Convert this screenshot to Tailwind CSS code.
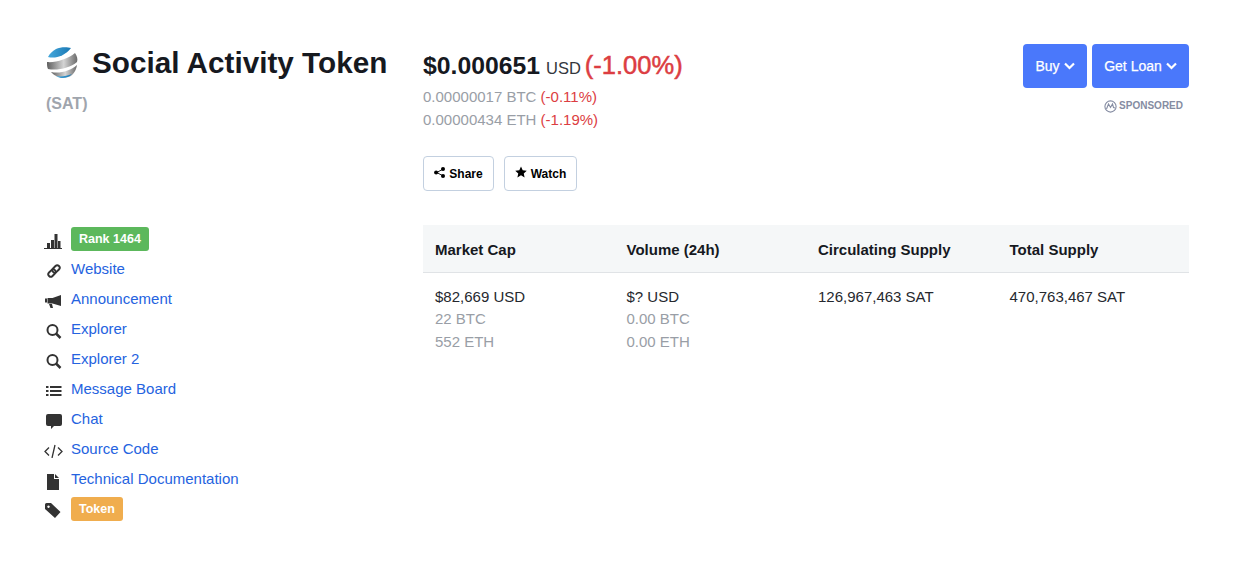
<!DOCTYPE html>
<html>
<head>
<meta charset="utf-8">
<script src="https://cdn.jsdelivr.net/npm/@tailwindcss/browser@4"></script>
</head>
<body class="bg-white font-['Liberation_Sans',Arial,sans-serif] text-[#16191f]">
<div class="pl-[46px] pr-[46px] pt-[44px] w-[1235px] h-[566px] overflow-hidden">
  <div class="flex h-[181px]">
    <div class="w-[377px]">
      <div class="flex items-center h-[38px]">
        <svg class="w-[32px] h-[32px] mr-[14px]" viewBox="0 0 32 32">
          <defs>
            <linearGradient id="g1" x1="0" y1="0" x2="1" y2="0"><stop offset="0" stop-color="#5f5f5f"/><stop offset=".55" stop-color="#d4d4d4"/><stop offset="1" stop-color="#6a6a6a"/></linearGradient>
            <linearGradient id="b1" x1="0" y1="0" x2="1" y2="0"><stop offset="0" stop-color="#45a8dc"/><stop offset="1" stop-color="#1a78b4"/></linearGradient>
          </defs>
          <path d="M2 10 C9 12 19 9 25 1 C21 0 14 0 10 2 C7 4 4 6 2 10Z" fill="url(#b1)"/>
          <path d="M1 15 C9 16 22 12 29 6 C31 9 32 12 31 15 C24 21 11 24 2 22 C1 20 1 18 1 15Z" fill="url(#g1)"/>
          <path d="M5 25 C14 27 24 24 31 18 C30 24 27 28 23 30 C16 31 9 30 5 25Z" fill="url(#g1)"/>
          <path d="M10 29 C15 30 21 29 26 27 C22 32 14 32 10 29Z" fill="url(#b1)"/>
        </svg>
        <h1 class="text-[29.7px] font-bold leading-[38px]">Social Activity Token</h1>
      </div>
      <div class="mt-[12px] text-[16px] leading-[20px] font-bold text-[#a0a5ad]">(SAT)</div>
    </div>
    <div class="flex-1">
      <div class="flex justify-between">
        <div>
          <div class="flex items-baseline h-[42px] pt-[1px]">
            <span class="text-[24.75px] font-bold leading-[40px]">$0.000651</span>
            <span class="text-[16.5px] ml-[6px] text-[#33373d]">USD</span>
            <span class="text-[25.5px] ml-[4px] text-[#dc3d42] leading-[40px] [-webkit-text-stroke:0.5px_#dc3d42]">(-1.00%)</span>
          </div>
          <div class="text-[15px] leading-[23px] text-[#999ea6] mt-[-1px]">0.00000017 BTC <span class="text-[#dc3d42]">(-0.11%)</span></div>
          <div class="text-[15px] leading-[23px] text-[#999ea6]">0.00000434 ETH <span class="text-[#dc3d42]">(-1.19%)</span></div>
        </div>
        <div class="flex flex-col items-end">
          <div class="flex gap-[5px]">
            <button class="h-[44px] w-[64px] rounded-[4px] bg-[#4a78fb] text-white text-[14px] flex items-center justify-center gap-[4px] [-webkit-text-stroke:0.25px_#fff]">Buy
              <svg class="w-[11px] h-[8px]" viewBox="0 0 11 8"><path d="M1 1.500 L5.500 6 L10 1.500" fill="none" stroke="#fff" stroke-width="2.200"/></svg>
            </button>
            <button class="h-[44px] w-[97px] rounded-[4px] bg-[#4a78fb] text-white text-[14px] flex items-center justify-center gap-[4px] [-webkit-text-stroke:0.25px_#fff]">Get Loan
              <svg class="w-[11px] h-[8px]" viewBox="0 0 11 8"><path d="M1 1.500 L5.500 6 L10 1.500" fill="none" stroke="#fff" stroke-width="2.200"/></svg>
            </button>
          </div>
          <div class="flex items-center mt-[11px] mr-[6px] text-[10px] font-bold text-[#858ca2] leading-[14px]">
            <svg class="w-[13px] h-[13px] mr-[2px]" viewBox="0 0 13 13"><circle cx="6.500" cy="6.500" r="5.600" fill="none" stroke="#858ca2" stroke-width="1.100"/><path d="M2.500 9 L4.500 4 L6.500 7.500 L8.500 4 L9.500 7.500 L11 8" fill="none" stroke="#858ca2" stroke-width="1.100"/></svg>
            SPONSORED
          </div>
        </div>
      </div>
      <div class="flex gap-[10px] mt-[25px]">
        <button class="h-[35px] w-[71px] rounded-[4px] border border-[#c3d0e0] bg-white text-[12px] font-bold text-black flex items-center justify-center gap-[4px]">
          <svg class="w-[11px] h-[11px] mt-[-2px]" viewBox="0 0 12 12"><path d="M9.500 2.500 L3 6 L9.500 9.500" fill="none" stroke="#000" stroke-width="1"/><circle cx="9.800" cy="2.200" r="2.200" fill="#000"/><circle cx="2.300" cy="6" r="2.200" fill="#000"/><circle cx="9.800" cy="9.800" r="2.200" fill="#000"/></svg>
          Share
        </button>
        <button class="h-[35px] w-[73px] rounded-[4px] border border-[#c3d0e0] bg-white text-[12px] font-bold text-black flex items-center justify-center gap-[4px]">
          <svg class="w-[12px] h-[12px] mt-[-3px]" viewBox="0 0 24 24"><path d="M12 1 L15.400 8.400 L23.500 9.300 L17.500 14.800 L19.200 22.800 L12 18.700 L4.800 22.800 L6.500 14.800 L0.500 9.300 L8.600 8.400Z" fill="#000"/></svg>
          Watch
        </button>
      </div>
    </div>
  </div>
  <div class="flex">
    <ul class="w-[377px] text-[15px] text-[#2563e0]">
      <li class="flex items-center h-[30px]">
        <svg class="w-[18px] h-[15px] mr-[9px] ml-[-2px] mt-[3px]" viewBox="0 0 18 15" fill="#333"><path d="M0 14h18v1H0zM3 9h3v5H3zM7 6h3v8H7zM10.500 0h3v14h-3zM14 7h2.500v7H14z"/></svg>
        <span class="inline-flex items-center h-[24px] px-[8px] mb-[2px] rounded-[3px] bg-[#5cb85c] text-white text-[12.500px] font-bold">Rank 1464</span>
      </li>
      <li class="flex items-center h-[30px]">
        <svg class="w-[14px] h-[14px] mr-[10px] ml-[1px] mt-[2px]" viewBox="0 0 16 16" fill="none" stroke="#333" stroke-width="2.200"><g transform="rotate(-45 8 8)"><rect x="0" y="5.200" width="9.500" height="5.600" rx="2.800"/><rect x="6.500" y="5.200" width="9.500" height="5.600" rx="2.800"/></g></svg>
        <a class="mb-[2px]">Website</a>
      </li>
      <li class="flex items-center h-[30px]">
        <svg class="w-[17px] h-[14px] mr-[9px] ml-[-1px] mt-[2px]" viewBox="0 0 17 14" fill="#333"><path d="M0 4.500h2v4H0zM2.500 4h5L16 1v11L7.500 9.500h-5zM4 10h3l1 4H5.500z"/></svg>
        <a class="mb-[2px]">Announcement</a>
      </li>
      <li class="flex items-center h-[30px]">
        <svg class="w-[16px] h-[15px] mr-[9px] mt-[3px]" viewBox="0 0 16 15" fill="none" stroke="#333" stroke-width="2"><circle cx="6.500" cy="6" r="5"/><path d="M10 9.500 L14.500 14" stroke-width="2.500"/></svg>
        <a class="mb-[2px]">Explorer</a>
      </li>
      <li class="flex items-center h-[30px]">
        <svg class="w-[16px] h-[15px] mr-[9px] mt-[3px]" viewBox="0 0 16 15" fill="none" stroke="#333" stroke-width="2"><circle cx="6.500" cy="6" r="5"/><path d="M10 9.500 L14.500 14" stroke-width="2.500"/></svg>
        <a class="mb-[2px]">Explorer 2</a>
      </li>
      <li class="flex items-center h-[30px]">
        <svg class="w-[16px] h-[12px] mr-[9px] mt-[2px]" viewBox="0 0 16 12" fill="#333"><path d="M0 1h2.500v2H0zM4 1h11.500v2H4zM0 5h2.500v2H0zM4 5h11.500v2H4zM0 9h2.500v2H0zM4 9h11.500v2H4z"/></svg>
        <a class="mb-[2px]">Message Board</a>
      </li>
      <li class="flex items-center h-[30px]">
        <svg class="w-[16px] h-[15px] mr-[9px] mt-[2px]" viewBox="0 0 16 15" fill="#333"><path d="M2 0h12A2 2 0 0 1 16 2v8a2 2 0 0 1-2 2H8l-3 3v-3H2a2 2 0 0 1-2-2V2a2 2 0 0 1 2-2z"/></svg>
        <a class="mb-[2px]">Chat</a>
      </li>
      <li class="flex items-center h-[30px]">
        <svg class="w-[19px] h-[14px] mr-[8px] ml-[-2px] mt-[2px]" viewBox="0 0 19 14" fill="none" stroke="#333" stroke-width="1.300"><path d="M5 3.500 L1 7.500 L5 11.500M14 3.500 L18 7.500 L14 11.500M11 1 L8 14"/></svg>
        <a class="mb-[2px]">Source Code</a>
      </li>
      <li class="flex items-center h-[30px]">
        <svg class="w-[12px] h-[16px] mr-[12px] ml-[1px] mt-[3px]" viewBox="0 0 12 16" fill="#333"><path d="M0 0h7v5h5v11H0zM8 0l4 4H8z"/></svg>
        <a class="mb-[2px]">Technical Documentation</a>
      </li>
      <li class="flex items-center h-[30px]">
        <svg class="w-[16px] h-[15px] mr-[10px] ml-[-1px]" viewBox="0 0 16 15" fill="#333"><path d="M0 1.500A1.500 1.500 0 0 1 1.500 0H6l9.500 9-5.500 6L0 6zM3.500 2.500a1.200 1.200 0 1 0 .01 0z" fill-rule="evenodd"/></svg>
        <span class="inline-flex items-center h-[24px] px-[8px] mb-[2px] rounded-[3px] bg-[#f0ad4e] text-white text-[12.500px] font-bold">Token</span>
      </li>
    </ul>
    <div class="w-[766px]">
      <div class="grid grid-cols-[191.500px_191.500px_191.500px_191.500px] h-[48px] pt-[4px] bg-[#f5f7f8] border-b border-[#e0e3e6] items-center text-[15px] font-bold">
        <div class="pl-[12px]">Market Cap</div>
        <div class="pl-[12px]">Volume (24h)</div>
        <div class="pl-[12px]">Circulating Supply</div>
        <div class="pl-[12px]">Total Supply</div>
      </div>
      <div class="grid grid-cols-[191.500px_191.500px_191.500px_191.500px] pt-[13px] text-[15px] text-[#25282e]">
        <div class="pl-[12px]"><div class="leading-[22px]">$82,669 USD</div><div class="text-[#999ea6] leading-[22px]">22 BTC</div><div class="text-[#999ea6] leading-[24px]">552 ETH</div></div>
        <div class="pl-[12px]"><div class="leading-[22px]">$? USD</div><div class="text-[#999ea6] leading-[22px]">0.00 BTC</div><div class="text-[#999ea6] leading-[24px]">0.00 ETH</div></div>
        <div class="pl-[12px] leading-[22px]">126,967,463 SAT</div>
        <div class="pl-[12px] leading-[22px]">470,763,467 SAT</div>
      </div>
    </div>
  </div>
</div>
</body>
</html>
